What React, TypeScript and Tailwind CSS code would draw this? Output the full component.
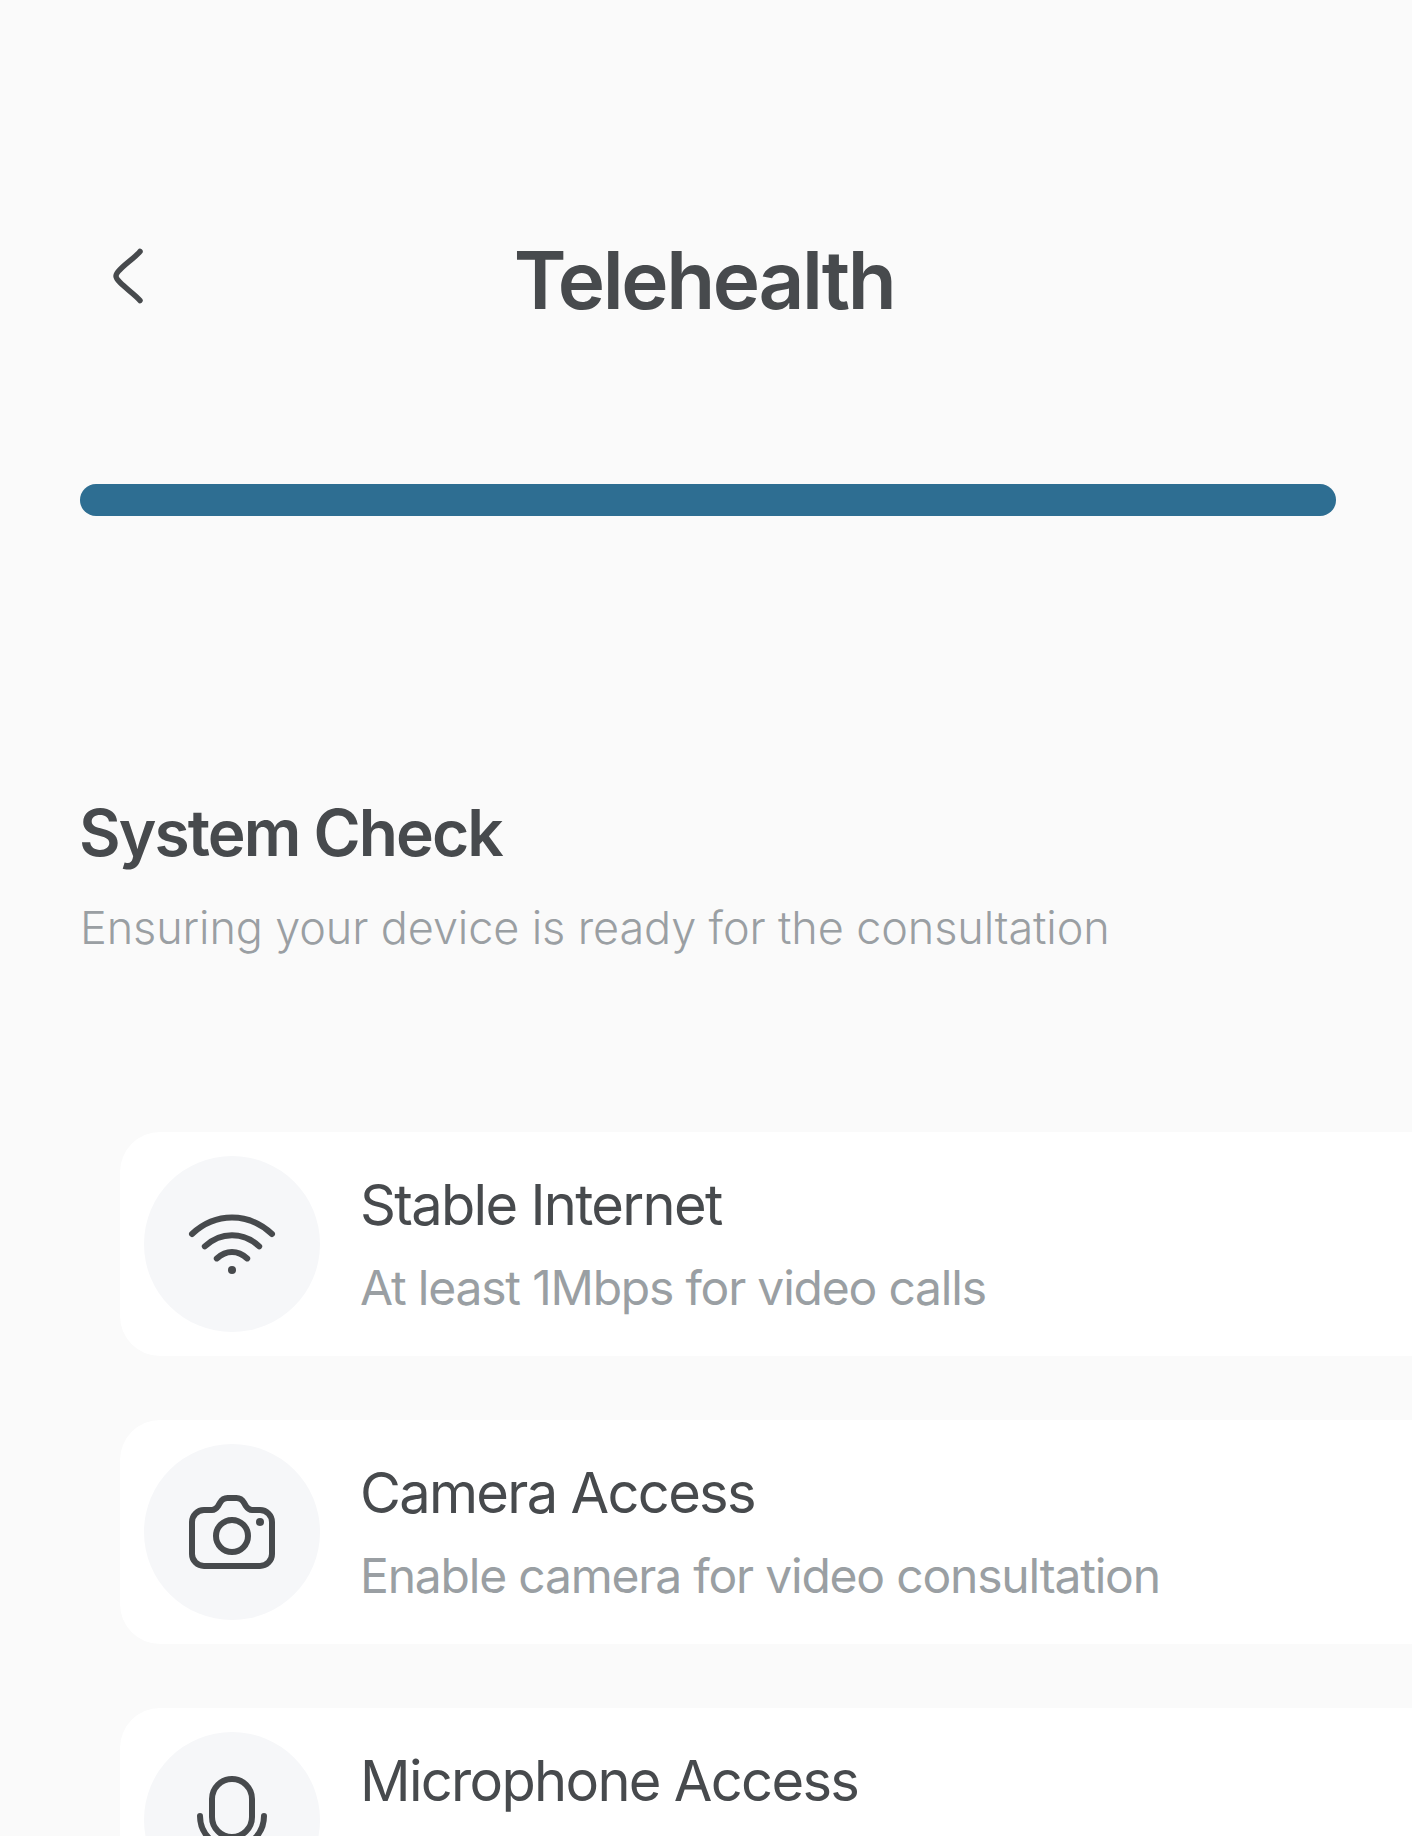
const checks = [
  { title: "Stable Internet", sub: "At least 1Mbps for video calls", icon: "wifi" },
  { title: "Camera Access", sub: "Enable camera for video consultation", icon: "camera" },
  { title: "Microphone Access", sub: "", icon: "mic" },
];

const CheckIcon = ({ name }: { name: string }) => {
  if (name === "wifi") {
    return (
      <svg viewBox="0 0 24 24" className="w-24 h-24" fill="none" stroke="#474a4d" strokeWidth="1.5" strokeLinecap="round">
        <path d="M2 9.500C4.700 7 8.200 5.400 12 5.400s7.300 1.600 10 4.100" />
        <path d="M5.200 12.600C7 10.900 9.400 9.800 12 9.800s5 1.100 6.800 2.800" />
        <path d="M8.200 15.600c1-.9 2.300-1.600 3.800-1.600s2.800.7 3.800 1.600" />
        <circle cx="12" cy="18.500" r="1" fill="#474a4d" stroke="none" />
      </svg>
    );
  }
  if (name === "camera") {
    return (
      <svg viewBox="0 0 24 24" className="w-24 h-24" fill="none" stroke="#474a4d" strokeWidth="1.5" strokeLinejoin="round">
        <path d="M7 6.500c.8 0 1.200-.5 1.600-1.100l.4-.7c.4-.7 1-1.200 1.900-1.200h2.200c.9 0 1.500.5 1.900 1.200l.4.7c.4.6.8 1.100 1.600 1.100h2a3 3 0 0 1 3 3v8a3 3 0 0 1-3 3H5a3 3 0 0 1-3-3v-8a3 3 0 0 1 3-3h2Z" />
        <circle cx="12" cy="13" r="4" />
        <circle cx="19" cy="9.500" r="1" fill="#474a4d" stroke="none" />
      </svg>
    );
  }
  return (
    <svg viewBox="0 0 24 24" className="w-24 h-24" fill="none" stroke="#474a4d" strokeWidth="1.5" strokeLinecap="round">
      <rect x="7" y="1.750" width="10" height="14.500" rx="5" />
      <path d="M4 11c0 4.400 3.600 8 8 8s8-3.600 8-8M12 19v3" />
    </svg>
  );
};

export default function App() {
  return (
    <div className="h-[1836px] overflow-hidden bg-[#fafafa] font-['Inter',sans-serif] text-[#474a4d]">
      <div className="pl-20 pr-[76px] pt-[240px]">
        <header className="relative flex h-20 items-center justify-center pr-2">
          <button className="absolute left-[31px] top-[6px]" aria-label="Back">
            <svg viewBox="0 0 32 60" className="w-8 h-[60px]" fill="none" stroke="#474a4d" strokeWidth="5.500" strokeLinecap="round">
              <path d="M29 5.500C23 13 5 24 5 30c0 6 18 17 24 24.500" />
            </svg>
          </button>
          <h1 className="text-[80px] leading-none font-semibold tracking-[-0.03em]">Telehealth</h1>
        </header>
        <div className="mt-[164px] h-8 rounded-2xl bg-[#2e6e92]" />
        <section className="mt-[281px]">
          <h2 className="-ml-px text-[64px] leading-[72px] font-semibold tracking-[-0.03em]">System Check</h2>
          <p className="mt-[31px] text-[45px] leading-[56px] font-light tracking-[-0.12px] text-[#9a9fa3]">Ensuring your device is ready for the consultation</p>
        </section>
      </div>
      <div className="ml-[120px] mt-[176px] flex w-[1400px] flex-col gap-16">
        {checks.map((item) => (
          <div key={item.title} className="flex h-56 shrink-0 items-start gap-10 rounded-[40px] bg-white p-6">
            <div className="flex h-44 w-44 shrink-0 items-center justify-center rounded-full bg-[#f6f7f9]">
              <CheckIcon name={item.icon} />
            </div>
            <div className="pt-[13px]">
              <div className="text-[56px] leading-[72px] tracking-[-0.03em]">{item.title}</div>
              {item.sub && <div className="mt-[17px] text-[48px] leading-[60px] tracking-[-0.025em] text-[#9a9fa3]">{item.sub}</div>}
            </div>
          </div>
        ))}
      </div>
    </div>
  );
}
